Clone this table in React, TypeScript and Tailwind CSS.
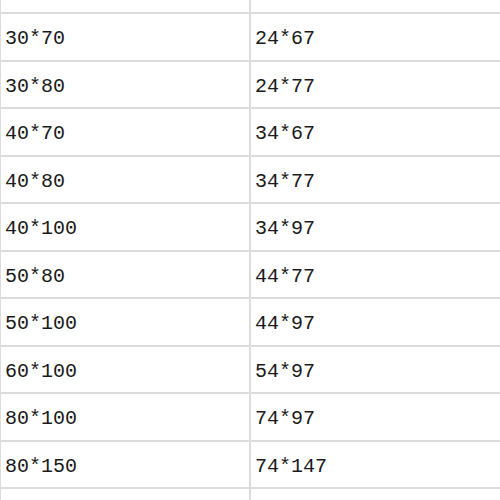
const rows: [string, string][] = [
  ["30*70", "24*67"],
  ["30*80", "24*77"],
  ["40*70", "34*67"],
  ["40*80", "34*77"],
  ["40*100", "34*97"],
  ["50*80", "44*77"],
  ["50*100", "44*97"],
  ["60*100", "54*97"],
  ["80*100", "74*97"],
  ["80*150", "74*147"],
  ["", ""],
];

export default function App() {
  return (
    <div className="h-[500px] w-[500px] overflow-hidden bg-white font-['Liberation_Mono',monospace] text-[20px] text-[#1a1a1a]">
      <div className="flex h-[14px] border-b-2 border-[#dcdcdc]">
        <div className="w-[251px] border-r-2 border-l border-[#dcdcdc]" />
        <div className="flex-1" />
      </div>
      {rows.map(([a, b], i) => (
        <div key={i} className="flex h-[47.5px] border-b-2 border-[#dcdcdc]">
          <div className="flex w-[251px] items-center border-r-2 border-l border-[#dcdcdc] pl-1 pt-[5px]">
            {a}
          </div>
          <div className="flex flex-1 items-center pl-[4px] pt-[5px]">{b}</div>
        </div>
      ))}
    </div>
  );
}
